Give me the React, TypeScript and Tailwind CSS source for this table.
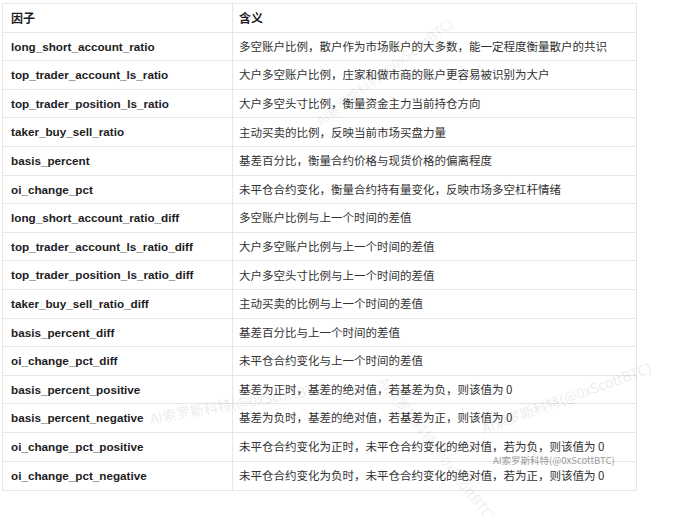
import React from 'react';

const rows: [string, string][] = [
  ['long_short_account_ratio', '多空账户比例，散户作为市场账户的大多数，能一定程度衡量散户的共识'],
  ['top_trader_account_ls_ratio', '大户多空账户比例，庄家和做市商的账户更容易被识别为大户'],
  ['top_trader_position_ls_ratio', '大户多空头寸比例，衡量资金主力当前持仓方向'],
  ['taker_buy_sell_ratio', '主动买卖的比例，反映当前市场买盘力量'],
  ['basis_percent', '基差百分比，衡量合约价格与现货价格的偏离程度'],
  ['oi_change_pct', '未平仓合约变化，衡量合约持有量变化，反映市场多空杠杆情绪'],
  ['long_short_account_ratio_diff', '多空账户比例与上一个时间的差值'],
  ['top_trader_account_ls_ratio_diff', '大户多空账户比例与上一个时间的差值'],
  ['top_trader_position_ls_ratio_diff', '大户多空头寸比例与上一个时间的差值'],
  ['taker_buy_sell_ratio_diff', '主动买卖的比例与上一个时间的差值'],
  ['basis_percent_diff', '基差百分比与上一个时间的差值'],
  ['oi_change_pct_diff', '未平仓合约变化与上一个时间的差值'],
  ['basis_percent_positive', '基差为正时，基差的绝对值，若基差为负，则该值为 0'],
  ['basis_percent_negative', '基差为负时，基差的绝对值，若基差为正，则该值为 0'],
  ['oi_change_pct_positive', '未平仓合约变化为正时，未平仓合约变化的绝对值，若为负，则该值为 0'],
  ['oi_change_pct_negative', '未平仓合约变化为负时，未平仓合约变化的绝对值，若为正，则该值为 0'],
];

const latin = "font-['Liberation_Sans','Noto_Sans_CJK_SC',sans-serif]";
const cjk = "font-['Noto_Sans_CJK_SC',sans-serif]";
const mark = 'AI索罗斯科特(@0xScottBTC)';

export default function App() {
  return (
    <div className="relative w-[680px] h-[517px] bg-white overflow-hidden">
      <div className="pt-[3px] pl-[2px]">
        <div className="w-[635px] border border-[#e6e6e6]">
          <div className="flex h-[28.6px] border-b border-[#e6e6e6]">
            <div className={`w-[230px] shrink-0 border-r border-[#e6e6e6] px-[8px] flex items-center text-[12px] font-bold text-[#1d1d1f] ${cjk}`}>
              因子
            </div>
            <div className={`flex-1 px-[6px] flex items-center text-[12px] font-bold text-[#1d1d1f] ${cjk}`}>
              含义
            </div>
          </div>
          {rows.map(([name, desc], i) => (
            <div
              key={name}
              className={`flex h-[28.6px] ${i < rows.length - 1 ? 'border-b border-[#e6e6e6]' : ''}`}
            >
              <div className={`w-[230px] shrink-0 border-r border-[#e6e6e6] px-[8px] flex items-center text-[11.7px] font-bold text-[#1d1d1f] ${latin}`}>
                {name}
              </div>
              <div className={`flex-1 px-[6px] flex items-center text-[11.5px] text-[#333] whitespace-nowrap ${cjk}`}>
                {desc}
              </div>
            </div>
          ))}
        </div>
      </div>

      {/* watermarks */}
      <span className={`pointer-events-none absolute left-[318px] top-[112px] origin-left rotate-[-37deg] text-[13px] whitespace-nowrap text-[#000] opacity-[0.06] ${cjk}`}>
        {mark}
      </span>
      <span className={`pointer-events-none absolute left-[150px] top-[408px] origin-left rotate-[-10deg] text-[14px] whitespace-nowrap text-[#000] opacity-[0.07] ${cjk}`}>
        {mark}
      </span>
      <span className={`pointer-events-none absolute left-[482px] top-[418px] origin-left rotate-[-20deg] text-[14px] whitespace-nowrap text-[#000] opacity-[0.07] ${cjk}`}>
        {mark}
      </span>
      <span className={`pointer-events-none absolute left-[382px] top-[368px] origin-left rotate-[52deg] text-[14px] whitespace-nowrap text-[#000] opacity-[0.06] ${cjk}`}>
        {mark}
      </span>
      <span className={`pointer-events-none absolute left-[493px] top-[456px] text-[9.5px] leading-none whitespace-nowrap text-[#9a9a9a] ${cjk}`}>
        {mark}
      </span>
    </div>
  );
}
